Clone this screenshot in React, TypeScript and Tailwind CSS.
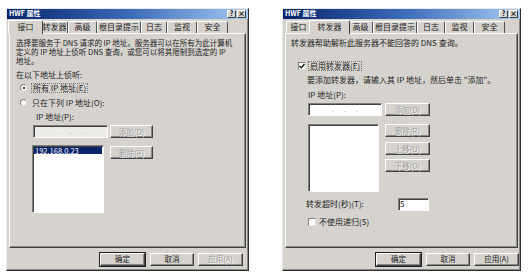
import React from "react";

const face = "bg-[#d6d3ce]";

function Btn({ label, w, h = 13, disabled = false, def = false }: { label: string; w: number; h?: number; disabled?: boolean; def?: boolean }) {
  return (
    <div
      className={`flex items-center justify-center ${face} border border-t-white border-l-white border-r-[#404040] border-b-[#404040] shadow-[inset_-1px_-1px_0_#888] ${def ? "outline outline-1 outline-[#222]" : ""} ${disabled ? "text-[#9a9a9a] [text-shadow:1px_1px_0_#fff]" : "text-[#222]"}`}
      style={{ width: w, height: h }}
    >
      <span className="text-[7.5px] leading-none">{label}</span>
    </div>
  );
}

function Sunken({ w, h, white = true, children }: { w: number; h: number; white?: boolean; children?: React.ReactNode }) {
  return (
    <div
      className={`border border-t-[#808080] border-l-[#808080] border-r-white border-b-white shadow-[inset_1px_1px_0_#404040] ${white ? "bg-white" : "bg-[#eeece8]"}`}
      style={{ width: w, height: h }}
    >
      {children}
    </div>
  );
}

function TitleBar() {
  return (
    <div className="h-[10px] flex items-center justify-between bg-gradient-to-r from-[#0a246a] via-[#3a6ab8] to-[#a6caf0] pl-[2px] pr-[2px]">
      <span className="text-white font-bold text-[7px] leading-none">HWF 属性</span>
      <div className="flex gap-[1px]">
        <div className={`w-[9px] h-[8px] ${face} flex items-center justify-center text-[7px] font-bold leading-none text-black border border-t-white border-l-white border-r-[#404040] border-b-[#404040]`}>?</div>
        <div className={`w-[9px] h-[8px] ${face} flex items-center justify-center text-[7px] font-bold leading-none text-black border border-t-white border-l-white border-r-[#404040] border-b-[#404040]`}>×</div>
      </div>
    </div>
  );
}

type Tab = { label: string; w: number };

function Tabs({ tabs, active, lead }: { tabs: Tab[]; active: number; lead: number }) {
  return (
    <div className="h-[14px] flex items-end" style={{ paddingLeft: lead }}>
      {tabs.map((t, i) =>
        i === active ? (
          <div
            key={i}
            className={`relative z-10 h-[14px] -mb-[1px] -mx-[2px] ${face} border border-b-0 border-t-white border-l-white border-r-[#404040] rounded-t-[2px] flex items-center justify-center text-[8px] leading-none text-[#222]`}
            style={{ width: t.w + 4 }}
          >
            <span className="-mt-[1px]">{t.label}</span>
          </div>
        ) : (
          <div
            key={i}
            className={`h-[12px] ${face} border border-b-0 border-t-white border-l-white border-r-[#505050] rounded-t-[2px] flex items-center justify-center text-[8px] leading-none text-[#222]`}
            style={{ width: t.w }}
          >
            {t.label}
          </div>
        )
      )}
    </div>
  );
}

function Radio({ checked }: { checked: boolean }) {
  return (
    <div className="w-[7px] h-[7px] rounded-full bg-white border border-t-[#808080] border-l-[#808080] border-r-[#e0e0e0] border-b-[#e0e0e0] flex items-center justify-center">
      {checked && <div className="w-[2px] h-[2px] rounded-full bg-black" />}
    </div>
  );
}

function Check({ checked }: { checked: boolean }) {
  return (
    <div className="w-[8px] h-[8px] bg-white border border-t-[#808080] border-l-[#808080] border-r-[#e0e0e0] border-b-[#e0e0e0] flex items-center justify-center">
      {checked && (
        <svg width="6" height="6" viewBox="0 0 6 6">
          <path d="M0.5 3 L2.3 4.8 L5.5 1" stroke="#000" strokeWidth="1.2" fill="none" />
        </svg>
      )}
    </div>
  );
}

function BottomButtons({ applyEnabled, ml }: { applyEnabled: boolean; ml: number }) {
  return (
    <div className="h-[22px] flex items-center" style={{ paddingLeft: ml }}>
      <Btn label="确定" w={45} def />
      <div className="w-[5px]" />
      <Btn label="取消" w={44} />
      <div className="w-[4px]" />
      <Btn label="应用(A)" w={45} disabled={!applyEnabled} />
    </div>
  );
}

function Window({ w, children }: { w: number; children: React.ReactNode }) {
  return (
    <div
      className={`h-[263px] ${face} border border-t-[#e8e8e8] border-l-[#e8e8e8] border-r-[#303030] border-b-[#303030] shadow-[inset_-1px_-1px_0_#888] flex flex-col`}
      style={{ width: w }}
    >
      {children}
    </div>
  );
}

function Panel({ children, pl }: { children: React.ReactNode; pl: number }) {
  return (
    <div
      className="mx-[2px] h-[216px] border border-t-white border-l-white border-r-[#404040] border-b-[#404040] shadow-[inset_-1px_-1px_0_#8a8a8a] flex flex-col text-[8px] text-[#222]"
      style={{ paddingLeft: pl }}
    >
      {children}
    </div>
  );
}

function IPDots({ color }: { color: string }) {
  return (
    <div className={`h-full flex items-center justify-around px-[8px] text-[7px] ${color}`}>
      <span />
      <span>.</span>
      <span>.</span>
      <span>.</span>
      <span />
    </div>
  );
}

function Row({ h, mt, children, ml = 0 }: { h: number; mt: number; children: React.ReactNode; ml?: number }) {
  return (
    <div className="flex items-center whitespace-nowrap leading-none" style={{ height: h, marginTop: mt, marginLeft: ml }}>
      {children}
    </div>
  );
}

export default function App() {
  const leftTabs: Tab[] = [
    { label: "接口", w: 31 },
    { label: "转发器", w: 27 },
    { label: "高级", w: 29 },
    { label: "根目录提示", w: 44 },
    { label: "日志", w: 26 },
    { label: "监视", w: 30 },
    { label: "安全", w: 31 },
  ];
  const rightTabs: Tab[] = [
    { label: "接口", w: 25 },
    { label: "转发器", w: 37 },
    { label: "高级", w: 25 },
    { label: "根目录提示", w: 44 },
    { label: "日志", w: 28 },
    { label: "监视", w: 29 },
    { label: "安全", w: 31 },
  ];

  return (
    <div className="w-[529px] h-[277px] bg-white flex font-['Noto_Sans_CJK_SC',sans-serif] pt-[8px] pl-[6px]">
      {/* Left dialog */}
      <Window w={243}>
        <TitleBar />
        <Tabs tabs={leftTabs} active={0} lead={3} />
        <Panel pl={6}>
          <div className="mt-[4px] whitespace-nowrap text-[7.5px] leading-none flex flex-col">
            <div className="h-[9px] flex items-center">选择要服务于 DNS 请求的 IP 地址。服务器可以在所有为此计算机</div>
            <div className="h-[9px] flex items-center">定义的 IP 地址上侦听 DNS 查询，或您可以将其限制到选定的 IP</div>
            <div className="h-[9px] flex items-center">地址。</div>
          </div>
          <Row h={10} mt={5}>在以下地址上侦听:</Row>
          <Row h={10} mt={3} ml={4}>
            <Radio checked />
            <span className="ml-[4px] border border-dotted border-[#777] px-[1px]">所有 IP 地址(E)</span>
          </Row>
          <Row h={10} mt={5} ml={4}>
            <Radio checked={false} />
            <span className="ml-[5px]">只在下列 IP 地址(O):</span>
          </Row>
          <Row h={10} mt={4} ml={20}>IP 地址(P):</Row>
          <Row h={13} mt={3} ml={17}>
            <Sunken w={75} h={13} white={false}>
              <IPDots color="text-[#aaa]" />
            </Sunken>
            <div className="w-[2px]" />
            <Btn label="添加(D)" w={43} disabled />
          </Row>
          <div className="flex mt-[7px] ml-[16px] items-start">
            <Sunken w={72} h={68}>
              <div className="m-[1px] bg-[#0a246a] text-white text-[7.5px] leading-[7px] h-[7px] pl-[1px]">192.168.0.23</div>
            </Sunken>
            <div className="w-[6px]" />
            <div className="mt-[1px]">
              <Btn label="删除(R)" w={43} disabled />
            </div>
          </div>
        </Panel>
        <BottomButtons applyEnabled={false} ml={93} />
      </Window>

      <div className="w-[33px]" />

      {/* Right dialog */}
      <Window w={239}>
        <TitleBar />
        <Tabs tabs={rightTabs} active={1} lead={3} />
        <Panel pl={5}>
          <Row h={10} mt={4}>转发器帮助解析此服务器不能回答的 DNS 查询。</Row>
          <Row h={10} mt={13} ml={7}>
            <Check checked />
            <span className="ml-[2px] border border-dotted border-[#777] px-[1px]">启用转发器(E)</span>
          </Row>
          <Row h={10} mt={4} ml={16}>要添加转发器，请输入其 IP 地址，然后单击 "添加"。</Row>
          <Row h={10} mt={5} ml={17}>IP 地址(P):</Row>
          <Row h={13} mt={3} ml={17}>
            <Sunken w={74} h={13}>
              <IPDots color="text-[#999]" />
            </Sunken>
            <div className="w-[3px]" />
            <Btn label="添加(D)" w={45} disabled />
          </Row>
          <div className="flex mt-[8px] ml-[17px] items-start">
            <Sunken w={71} h={68} />
            <div className="w-[6px]" />
            <div className="flex flex-col">
              <Btn label="删除(R)" w={45} disabled />
              <div className="h-[5px]" />
              <Btn label="上移(U)" w={45} disabled />
              <div className="h-[4px]" />
              <Btn label="下移(O)" w={45} disabled />
            </div>
          </div>
          <Row h={13} mt={6} ml={15}>
            <span className="w-[92px]">转发超时(秒)(T):</span>
            <Sunken w={31} h={13}>
              <div className="h-full flex items-center pl-[1px] text-[8px] leading-none">5</div>
            </Sunken>
          </Row>
          <Row h={10} mt={6} ml={17}>
            <Check checked={false} />
            <span className="ml-[3px]">不使用递归(S)</span>
          </Row>
        </Panel>
        <BottomButtons applyEnabled ml={93} />
      </Window>
    </div>
  );
}
